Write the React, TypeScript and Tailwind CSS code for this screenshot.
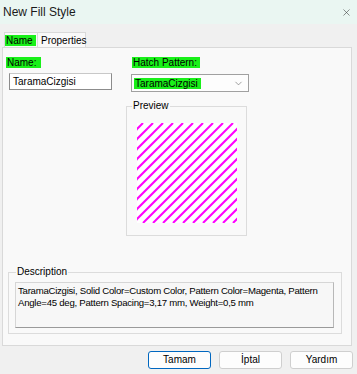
import React from 'react';
import { X, ChevronDown } from 'lucide-react';

const font = { fontFamily: '"Liberation Sans", Arial, sans-serif' };

function Hatch() {
  return (
    <svg width="100" height="100" viewBox="0 0 100 100" className="block">
      <defs>
        <clipPath id="c">
          <rect x="0" y="0" width="100" height="100" />
        </clipPath>
      </defs>
      <rect width="100" height="100" fill="#ffffff" />
      <g clipPath="url(#c)" stroke="#ff00ff" strokeWidth="2">
        {Array.from({ length: 22 }).map((_, i) => {
          const o = i * 10 - 4;
          return <line key={i} x1={o - 100} y1={100} x2={o} y2={0} />;
        })}
      </g>
    </svg>
  );
}

export default function App() {
  return (
    <div className="w-[357px] h-[374px] bg-[#f0f0f0] text-[10px] text-black overflow-hidden whitespace-nowrap" style={font}>
      <div className="h-[24px] bg-[#eaf6f2] flex items-center justify-between pl-[3px] pr-[5px]">
        <span className="text-[12px] text-[#1a1a1a]">New Fill Style</span>
        <X size={11} strokeWidth={1.2} className="text-[#333]" />
      </div>

      <div className="flex pl-[4px] mt-[8px] h-[15px]">
        <div className="w-[34px] h-[15px] border border-b-0 border-[#d9d9d9] bg-[#f9f9f9] flex items-center">
          <span className="bg-[#19f019] w-[31px] h-[11px] leading-[11px] pl-[1px]">Name</span>
        </div>
        <div className="w-[48px] h-[15px] border border-b-0 border-l-0 border-[#d9d9d9] bg-[#f9f9f9] flex items-center pl-[3px]">
          Properties
        </div>
      </div>

      <div className="ml-[2px] w-[350px] h-[299px] border border-[#d9d9d9] bg-[#f9f9f9]">
        <div className="flex">
          <div className="w-[120px] pt-[9px] pl-[3px]">
            <span className="block bg-[#19f019] w-[35px] h-[11px] leading-[11px] pl-[1px]">Name:</span>
            <div className="mt-[5px] ml-[3px] w-[103px] h-[17px] border border-[#8c8c8c] border-t-[#c8c8c8] bg-white pl-[3px] leading-[15px]">
              TaramaCizgisi
            </div>
          </div>
          <div className="ml-[3px] pt-[9px]">
            <span className="block ml-[6px] bg-[#19f019] w-[68px] h-[11px] leading-[11px] pl-[1px]">Hatch Pattern:</span>
            <div className="mt-[6px] ml-[5px] w-[118px] h-[18px] border border-[#a0a0a0] bg-[#fdfdfd] flex items-center justify-between pl-[2px] pr-[4px]">
              <span className="bg-[#19f019] w-[67px] h-[11px] leading-[11px] pl-[1px]">TaramaCizgisi</span>
              <ChevronDown size={11} strokeWidth={1.2} className="text-[#555]" />
            </div>
            <div className="relative mt-[14px] w-[121px] h-[130px] border border-[#dcdcdc]">
              <span className="absolute left-[5px] -top-[7px] bg-[#f9f9f9] px-[1px] leading-[12px]">Preview</span>
              <div className="ml-[10px] mt-[16px]">
                <Hatch />
              </div>
            </div>
          </div>
        </div>

        <div className="relative ml-[5px] mt-[36px] w-[334px] h-[62px] border border-[#dcdcdc]">
          <span className="absolute left-[7px] -top-[7px] bg-[#f9f9f9] px-[1px] leading-[12px]">Description</span>
          <div className="ml-[6px] mt-[9px] w-[319px] h-[46px] border border-[#d6d6d6] border-b-[#9a9a9a] border-r-[#b8b8b8] bg-[#f7f7f7] px-[2px] pt-[2px] leading-[12px] text-[9.6px] tracking-[-0.25px] whitespace-normal">
            TaramaCizgisi, Solid Color=Custom Color, Pattern Color=Magenta, Pattern Angle=45 deg, Pattern Spacing=3,17 mm, Weight=0,5 mm
          </div>
        </div>
      </div>

      <div className="flex justify-end gap-[8px] pr-[4px] mt-[5px]">
        <button className="w-[63px] h-[18px] rounded-[3px] border border-[#0067c0] bg-[#fdfdfd] leading-[16px]">Tamam</button>
        <button className="w-[63px] h-[18px] rounded-[3px] border border-[#cfcfcf] bg-[#fdfdfd] leading-[16px]">İptal</button>
        <button className="w-[63px] h-[18px] rounded-[3px] border border-[#cfcfcf] bg-[#fdfdfd] leading-[16px]">Yardım</button>
      </div>
    </div>
  );
}
